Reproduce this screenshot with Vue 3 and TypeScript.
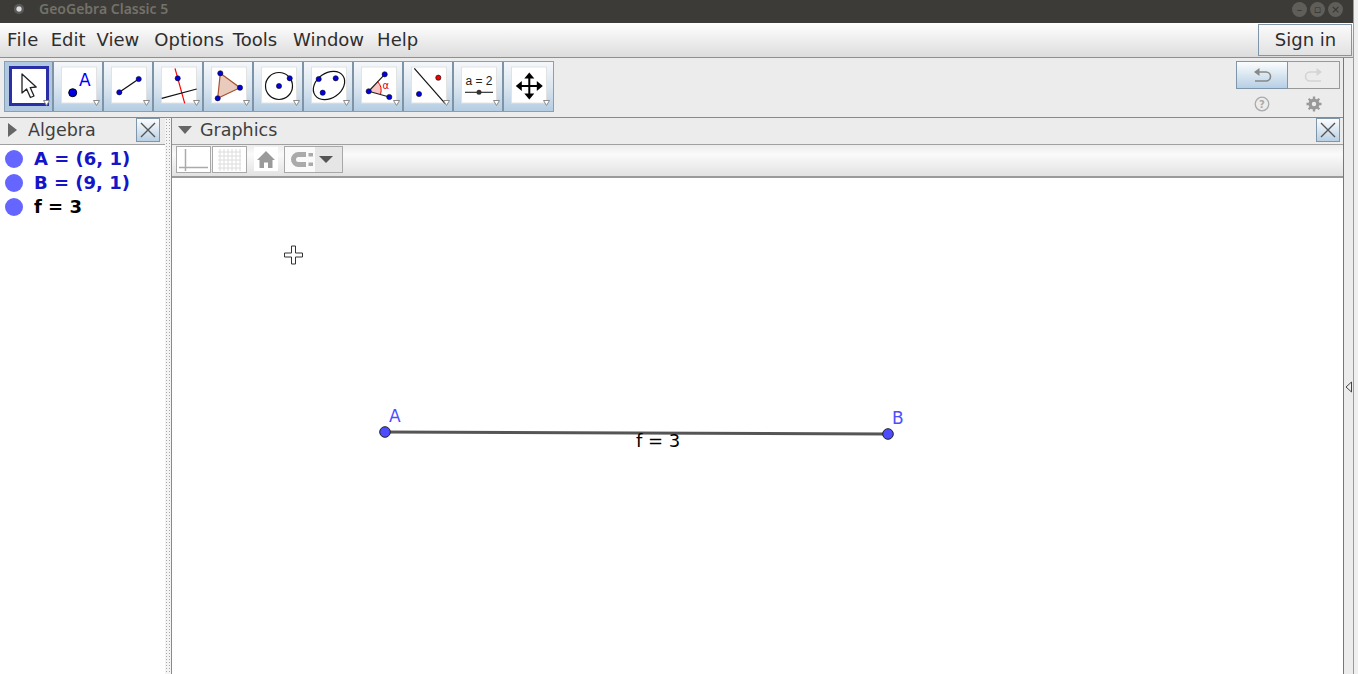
<script setup lang="ts">
const menus: string[] = ['File', 'Edit', 'View', 'Options', 'Tools', 'Window', 'Help']
const rows = [
  { text: 'A = (6, 1)', cls: 'blue' },
  { text: 'B = (9, 1)', cls: 'blue' },
  { text: 'f = 3', cls: 'black' },
]
</script>

<template>
  <div class="screen">
    <div class="window">
      <header class="titlebar">
        <span class="app-dot"></span>
        <span class="title">GeoGebra Classic 5</span>
        <span class="controls">
          <span class="ctl">–</span>
          <span class="ctl">▫</span>
          <span class="ctl">×</span>
        </span>
      </header>

      <nav class="menubar">
        <span v-for="m in menus" :key="m" class="menu">{{ m }}</span>
        <button class="signin">Sign in</button>
      </nav>

      <div class="body">
        <div class="content">
          <section class="toolbar">
            <div class="tools">
              <div class="tool active">
                <svg viewBox="0 0 50 50" width="50" height="50">
                  <rect x="6.500" y="6.500" width="37" height="37" fill="#fff" stroke="#2a2fa8" stroke-width="3" />
                  <path d="M18 13 L18 32 L22.600 28 L26.400 36.500 L30 35 L26.200 26.600 L32.200 26 Z" fill="#fff" stroke="#222" stroke-width="1.300" stroke-linejoin="round" />
                  <path class="tri" d="M39.500 39.500 h6 l-3 5 z" />
                </svg>
              </div>
              <div class="tool">
                <svg viewBox="0 0 50 50" width="50" height="50">
                  <rect class="face" x="7.500" y="6" width="35" height="36" />
                  <circle cx="18.700" cy="31.700" r="4" fill="#0000e0" stroke="#000" />
                  <text x="25" y="24.700" class="pointlabel">A</text>
                  <path class="tri" d="M39.500 39.500 h6 l-3 5 z" />
                </svg>
              </div>
              <div class="tool">
                <svg viewBox="0 0 50 50" width="50" height="50">
                  <rect class="face" x="7.500" y="6" width="35" height="36" />
                  <line x1="15.300" y1="31.300" x2="34.700" y2="18" stroke="#111" stroke-width="1.300" />
                  <circle class="pt" cx="15.300" cy="31.300" r="2.600" />
                  <circle class="pt" cx="34.700" cy="18" r="2.600" />
                  <path class="tri" d="M39.500 39.500 h6 l-3 5 z" />
                </svg>
              </div>
              <div class="tool">
                <svg viewBox="0 0 50 50" width="50" height="50">
                  <rect class="face" x="7.500" y="6" width="35" height="36" />
                  <line x1="21" y1="7.300" x2="30.700" y2="42.300" stroke="#f00" stroke-width="1.200" />
                  <line x1="7.700" y1="37.300" x2="42.700" y2="28" stroke="#111" stroke-width="1.200" />
                  <circle class="pt" cx="23.700" cy="17.300" r="2.600" />
                  <path class="tri" d="M39.500 39.500 h6 l-3 5 z" />
                </svg>
              </div>
              <div class="tool">
                <svg viewBox="0 0 50 50" width="50" height="50">
                  <rect class="face" x="7.500" y="6" width="35" height="36" />
                  <path d="M16.300 12.300 L36 26.700 L13.700 37.300 Z" fill="#e8cbbd" stroke="#a5522d" stroke-width="1.200" />
                  <circle class="pt" cx="16.300" cy="12.300" r="2.600" />
                  <circle class="pt" cx="36" cy="26.700" r="2.600" />
                  <circle class="pt" cx="13.700" cy="37.300" r="2.600" />
                  <path class="tri" d="M39.500 39.500 h6 l-3 5 z" />
                </svg>
              </div>
              <div class="tool">
                <svg viewBox="0 0 50 50" width="50" height="50">
                  <rect class="face" x="7.500" y="6" width="35" height="36" />
                  <circle cx="25" cy="25" r="13.500" fill="none" stroke="#111" stroke-width="1.200" />
                  <circle class="pt" cx="25" cy="25" r="2.600" />
                  <circle class="pt" cx="35.700" cy="17.300" r="2.600" />
                  <path class="tri" d="M39.500 39.500 h6 l-3 5 z" />
                </svg>
              </div>
              <div class="tool">
                <svg viewBox="0 0 50 50" width="50" height="50">
                  <rect class="face" x="7.500" y="6" width="35" height="36" />
                  <ellipse cx="25" cy="24.500" rx="17" ry="12.500" transform="rotate(-35 25 24.500)" fill="none" stroke="#111" stroke-width="1.200" />
                  <circle class="pt" cx="14.700" cy="18" r="2.600" />
                  <circle class="pt" cx="31.700" cy="17.300" r="2.600" />
                  <circle class="pt" cx="18.700" cy="31.700" r="2.600" />
                  <path class="tri" d="M39.500 39.500 h6 l-3 5 z" />
                </svg>
              </div>
              <div class="tool">
                <svg viewBox="0 0 50 50" width="50" height="50">
                  <rect class="face" x="7.500" y="6" width="35" height="36" />
                  <path d="M14.700 30.300 L23.500 20.500 A13 13 0 0 1 26.500 33.300 Z" fill="#fac5c5" />
                  <path d="M23.500 20.500 A13 13 0 0 1 26.500 33.300" fill="none" stroke="#e00" stroke-width="1" />
                  <path d="M30.700 13.300 L14.700 30.300 L35.300 36" fill="none" stroke="#222" stroke-width="1.200" />
                  <circle class="pt" cx="14.700" cy="30.300" r="2.600" />
                  <circle class="pt" cx="30.700" cy="13.300" r="2.600" />
                  <circle class="pt" cx="35.300" cy="36" r="2.600" />
                  <text x="28.500" y="28" class="alpha">α</text>
                  <path class="tri" d="M39.500 39.500 h6 l-3 5 z" />
                </svg>
              </div>
              <div class="tool">
                <svg viewBox="0 0 50 50" width="50" height="50">
                  <rect class="face" x="7.500" y="6" width="35" height="36" />
                  <line x1="10.300" y1="7.300" x2="41" y2="42.300" stroke="#111" stroke-width="1.200" />
                  <circle cx="34.300" cy="16.700" r="2.600" fill="#f00000" stroke="#111" stroke-width=".6" />
                  <circle class="pt" cx="15" cy="33" r="2.600" />
                  <path class="tri" d="M39.500 39.500 h6 l-3 5 z" />
                </svg>
              </div>
              <div class="tool">
                <svg viewBox="0 0 50 50" width="50" height="50">
                  <rect class="face" x="7.500" y="6" width="35" height="36" />
                  <text x="25" y="24" class="eq">a = 2</text>
                  <line x1="11" y1="31.300" x2="39" y2="31.300" stroke="#222" stroke-width="1.100" />
                  <circle cx="25" cy="31.300" r="2.500" fill="#333" />
                  <path class="tri" d="M39.500 39.500 h6 l-3 5 z" />
                </svg>
              </div>
              <div class="tool">
                <svg viewBox="0 0 50 50" width="50" height="50">
                  <rect class="face" x="7.500" y="6" width="35" height="36" />
                  <path d="M25.300 11.500 L30.300 17.500 H26.300 V24 H32.800 V20 L38.800 25 L32.800 30 V26 H26.300 V32.500 H30.300 L25.300 38.500 L20.300 32.500 H24.300 V26 H17.800 V30 L11.800 25 L17.800 20 V24 H24.300 V17.500 H20.300 Z" fill="#000" />
                  <path class="tri" d="M39.500 39.500 h6 l-3 5 z" />
                </svg>
              </div>
            </div>

            <div class="side">
              <div class="undo">
                <button class="u on">
                  <svg viewBox="0 0 26 26" width="26" height="26">
                    <path d="M7 10 H17 A4.500 4.500 0 0 1 17 19 H6" fill="none" stroke="#888" stroke-width="1.600" />
                    <path d="M10.500 6 V14 L5 10 Z" fill="#888" />
                  </svg>
                </button>
                <button class="u">
                  <svg viewBox="0 0 26 26" width="26" height="26">
                    <path d="M19 10 H9 A4.500 4.500 0 0 0 9 19 H20" fill="none" stroke="#d4d4d4" stroke-width="1.600" />
                    <path d="M15.500 6 V14 L21 10 Z" fill="#d4d4d4" />
                  </svg>
                </button>
              </div>
              <div class="helpers">
                <svg viewBox="0 0 16 16" width="16" height="16">
                  <circle cx="8" cy="8" r="6.800" fill="none" stroke="#aaa" stroke-width="1.300" />
                  <text x="8" y="11.500" class="q">?</text>
                </svg>
                <svg viewBox="0 0 16 16" width="16" height="16">
                  <circle cx="8" cy="8" r="4.200" fill="none" stroke="#999" stroke-width="2.600" />
                  <path d="M8 0.500 V15.500 M0.500 8 H15.500 M2.700 2.700 L13.300 13.300 M13.300 2.700 L2.700 13.300" stroke="#999" stroke-width="2.300" />
                  <circle cx="8" cy="8" r="2.200" fill="#ececec" />
                </svg>
              </div>
            </div>
          </section>

          <section class="panels">
            <aside class="algebra">
              <div class="dock">
                <span class="arrow-right"></span>
                <span class="dock-title">Algebra</span>
                <button class="close">
                  <svg viewBox="0 0 22 22" width="22" height="22"><path d="M4 4 L18 18 M18 4 L4 18" stroke="#555" stroke-width="1.400" /></svg>
                </button>
              </div>
              <div class="rows">
                <div v-for="r in rows" :key="r.text" class="row">
                  <span class="dot"></span>
                  <span class="expr" :class="r.cls">{{ r.text }}</span>
                </div>
              </div>
            </aside>

            <div class="splitter"></div>

            <main class="graphics">
              <div class="dock gdock">
                <span class="arrow-down"></span>
                <span class="dock-title">Graphics</span>
                <button class="close">
                  <svg viewBox="0 0 22 22" width="22" height="22"><path d="M4 4 L18 18 M18 4 L4 18" stroke="#555" stroke-width="1.400" /></svg>
                </button>
              </div>
              <div class="gbar">
                <button class="gbtn">
                  <svg viewBox="0 0 33 25" width="33" height="25">
                    <path d="M8.500 2 V24 M2 20.500 H31" stroke="#aaa" stroke-width="1.500" fill="none" />
                  </svg>
                </button>
                <button class="gbtn">
                  <svg viewBox="0 0 33 25" width="33" height="25">
                    <path d="M5 5 H28 M5 9 H28 M5 13 H28 M5 17 H28 M5 21 H28 M7 2 V24 M11 2 V24 M15 2 V24 M19 2 V24 M23 2 V24 M27 2 V24" stroke="#dcdcdc" stroke-width="1" fill="none" />
                  </svg>
                </button>
                <span class="home">
                  <svg viewBox="0 0 24 24" width="24" height="24">
                    <path d="M12 4 L21 13 H18.500 V21 H14 V15.500 H10 V21 H5.500 V13 H3 Z" fill="#9a9a9a" />
                  </svg>
                </span>
                <button class="gbtn magnet">
                  <svg viewBox="0 0 30 25" width="30" height="25">
                    <rect width="30" height="25" fill="#fafafa" />
                    <path d="M21 7.500 H13.500 A5 5 0 0 0 13.500 17.500 H21" fill="none" stroke="#aaa" stroke-width="5" />
                    <rect x="23.500" y="6" width="4.500" height="3.500" fill="#aaa" />
                    <rect x="23.500" y="15.500" width="4.500" height="3.500" fill="#aaa" />
                  </svg>
                  <span class="caret"></span>
                </button>
              </div>
              <div class="canvas">
                <svg class="plot" width="1170" height="496" viewBox="172 178 1170 496">
                  <path d="M284.500 253 h7 v-7 h4 v7 h7 v4 h-7 v7 h-4 v-7 h-7 z" fill="#fff" stroke="#333" stroke-width="1" />
                  <line x1="385" y1="432" x2="888" y2="434" stroke="#555" stroke-width="3" />
                  <circle cx="385" cy="432" r="5.300" fill="#4d4dff" stroke="#222" stroke-width="1" />
                  <circle cx="888" cy="434" r="5.300" fill="#4d4dff" stroke="#222" stroke-width="1" />
                  <text x="389" y="422" class="lbl">A</text>
                  <text x="892" y="424" class="lbl">B</text>
                  <text x="636" y="447" class="seg">f = 3</text>
                </svg>
              </div>
            </main>
          </section>
        </div>

        <div class="strip">
          <svg viewBox="0 0 8 12" width="8" height="12"><path d="M6.500 1 L1 6 L6.500 11 Z" fill="#eee" stroke="#444" stroke-width="1" /></svg>
        </div>
      </div>
    </div>
    <div class="beyond"></div>
  </div>
</template>

<style scoped>
.screen {
  display: flex;
  width: 1358px;
  height: 674px;
  overflow: hidden;
  background: #f2f2f2;
  font-family: "DejaVu Sans", sans-serif;
}
.window {
  width: 1354px;
  display: flex;
  flex-direction: column;
  border-right: 1px solid #9a9a9a;
  box-sizing: border-box;
}
.beyond {
  flex: 1;
  background: #efefef;
}
.titlebar {
  height: 23px;
  flex: none;
  background: #3c3b37;
  display: flex;
  align-items: center;
  padding: 0 0 5px 14px;
  box-sizing: border-box;
}
.app-dot {
  width: 10px;
  height: 10px;
  border-radius: 50%;
  background: radial-gradient(circle, #ddd 0 30%, #555 45%, #6a6a6a 90%);
}
.title {
  margin-left: 15px;
  font: 600 14px "Noto Sans", sans-serif;
  color: #73716a;
  padding-bottom: 2px;
}
.controls {
  margin-left: auto;
  margin-right: 10px;
  display: flex;
  gap: 3px;
}
.ctl {
  width: 15px;
  height: 15px;
  border-radius: 50%;
  background: #5f5e59;
  color: #33322f;
  font-size: 11px;
  line-height: 15px;
  text-align: center;
}
.menubar {
  height: 35px;
  flex: none;
  box-sizing: border-box;
  display: flex;
  align-items: center;
  padding-left: 7px;
  gap: 13px;
  background: linear-gradient(#fff, #dcdcdc);
  border-bottom: 1px solid #8f8f8f;
}
.menu {
  font-size: 18px;
  color: #2e2e2e;
  position: relative;
  top: -1px;
}
.menu:nth-child(1) {
  letter-spacing: 0.4px;
}
.menu:nth-child(2) {
  margin-left: -1px;
}
.menu:nth-child(3) {
  margin-left: -2px;
}
.menu:nth-child(4) {
  margin-left: 2px;
}
.menu:nth-child(5) {
  margin-left: -4px;
}
.menu:nth-child(6) {
  margin-left: 3px;
}
.signin {
  margin-left: auto;
  margin-right: 1px;
  width: 94px;
  height: 32px;
  border: 1px solid #7f95a9;
  background: linear-gradient(#fafafa, #e2e2e2);
  font: 18px "DejaVu Sans", sans-serif;
  color: #2e2e2e;
  padding: 0 0 1px 1px;
}
.body {
  flex: 1;
  display: flex;
  min-height: 0;
}
.content {
  width: 1343px;
  flex: none;
  display: flex;
  flex-direction: column;
  border-right: 1px solid #777;
  box-sizing: content-box;
}
.strip {
  flex: 1;
  background: #ececec;
  display: flex;
  align-items: center;
  justify-content: center;
  padding-top: 42px;
  box-sizing: border-box;
}
.toolbar {
  height: 60px;
  flex: none;
  box-sizing: border-box;
  background: #ececec;
  display: flex;
  justify-content: space-between;
  padding: 3px 3px 0 4px;
  border-bottom: 1px solid #8a8a8a;
}
.tools {
  display: flex;
  height: 51px;
  box-sizing: border-box;
  border: 1px solid #86a0b6;
}
.tool {
  width: 50px;
  height: 49px;
  background: linear-gradient(#f4f7fa, #dbe6f0 50%, #b4cde2);
  border-right: 2px solid #7f93a6;
  box-sizing: border-box;
  overflow: hidden;
}
.tool:first-child {
  width: 49px;
}
.tool:last-child {
  width: 49px;
  border-right: 0;
}
.tool.active {
  background: #b0c8e0;
}
.tool svg {
  display: block;
  margin-top: -1px;
}
.tool.active svg {
  margin-left: -1px;
}
.face {
  fill: #fff;
  stroke: #e2e2e2;
  stroke-width: 1;
}
.tri {
  fill: #fff;
  stroke: #8a8a8a;
  stroke-width: 1;
}
.pt {
  fill: #0000e0;
  stroke: #111;
  stroke-width: .6;
}
.pointlabel {
  font: 17px "DejaVu Sans", sans-serif;
  fill: #0000ff;
}
.alpha {
  font: 10px "DejaVu Sans", sans-serif;
  fill: #e00000;
}
.eq {
  font: 12px "Liberation Sans", sans-serif;
  text-anchor: middle;
  fill: #222;
}
.side {
  width: 104px;
  display: flex;
  flex-direction: column;
  align-items: center;
}
.undo {
  display: flex;
  height: 28px;
}
.u {
  width: 52px;
  height: 28px;
  padding: 0;
  border: 1px solid #999;
  background: #ececec;
  display: flex;
  align-items: center;
  justify-content: center;
}
.u.on {
  border-color: #7f95a9;
  background: linear-gradient(#fbfdfe, #b7cfe4);
}
.u + .u {
  border-left: 0;
}
.helpers {
  display: flex;
  gap: 36px;
  margin-top: 7px;
}
.q {
  font: bold 10px "DejaVu Sans", sans-serif;
  text-anchor: middle;
  fill: #aaa;
}
.panels {
  flex: 1;
  display: flex;
  min-height: 0;
  background: #fff;
}
.algebra {
  width: 165px;
  flex: none;
}
.dock {
  height: 27px;
  box-sizing: border-box;
  background: #ececec;
  border-bottom: 1px solid #a0a0a0;
  display: flex;
  align-items: center;
  padding: 0 0 2px 8px;
}
.arrow-right {
  width: 0;
  height: 0;
  border-left: 9px solid #666;
  border-top: 7px solid transparent;
  border-bottom: 7px solid transparent;
}
.arrow-down {
  width: 0;
  height: 0;
  border-top: 8px solid #666;
  border-left: 7px solid transparent;
  border-right: 7px solid transparent;
}
.dock-title {
  font-size: 17.500px;
  color: #3f3f3f;
  margin-left: 11px;
}
.gdock .dock-title {
  margin-left: 8px;
}
.close {
  margin-left: auto;
  margin-right: 5px;
  width: 24px;
  height: 24px;
  padding: 0;
  border: 1px solid #7f95a9;
  background: linear-gradient(#fdfdfe, #b9d0e4);
  display: flex;
  align-items: center;
  justify-content: center;
}
.gdock {
  padding-left: 6px;
}
.gdock .close {
  margin-right: 3px;
}
.rows {
  padding-top: 2px;
}
.row {
  height: 24px;
  display: flex;
  align-items: center;
  padding-left: 5px;
}
.dot {
  width: 18px;
  height: 18px;
  border-radius: 50%;
  background: #6565ff;
}
.expr {
  font-size: 18px;
  font-weight: 700;
  margin-left: 11px;
  position: relative;
  top: -1px;
}
.blue {
  color: #1414c8;
}
.black {
  color: #000;
}
.splitter {
  width: 7px;
  flex: none;
  box-sizing: border-box;
  background-color: #f4f4f4;
  background-image: radial-gradient(#a9a9a9 1px, transparent 1px);
  background-size: 3px 3px;
  border-right: 1px solid #8a8a8a;
}
.graphics {
  flex: 1;
  min-width: 0;
  display: flex;
  flex-direction: column;
}
.gbar {
  height: 33px;
  flex: none;
  box-sizing: border-box;
  display: flex;
  align-items: flex-start;
  gap: 1px;
  padding: 1px 0 0 4px;
  background: linear-gradient(#ececec, #fafafa 30%, #e2e2e2);
  border-bottom: 2px solid #9a9a9a;
}
.gbtn {
  height: 27px;
  padding: 0;
  border: 1px solid #a8a8a8;
  background: #fff;
  display: flex;
  align-items: center;
  justify-content: center;
  box-sizing: border-box;
  width: 35px;
}
.home {
  width: 24px;
  height: 24px;
  margin: 1px 5px 0 6px;
  background: #fff;
  display: flex;
}
.magnet {
  width: 59px;
  justify-content: flex-start;
  background: #e6e6e6;
}
.caret {
  width: 0;
  height: 0;
  margin-left: 4px;
  border-top: 7px solid #555;
  border-left: 7px solid transparent;
  border-right: 7px solid transparent;
}
.canvas {
  flex: 1;
  min-height: 0;
  position: relative;
  background: #fff;
}
.plot {
  position: absolute;
  left: 0;
  top: 0;
  display: block;
}
.lbl {
  font: 17px "DejaVu Sans", sans-serif;
  fill: #4d4dff;
}
.seg {
  font: 18px "DejaVu Sans", sans-serif;
  fill: #000;
}
</style>
